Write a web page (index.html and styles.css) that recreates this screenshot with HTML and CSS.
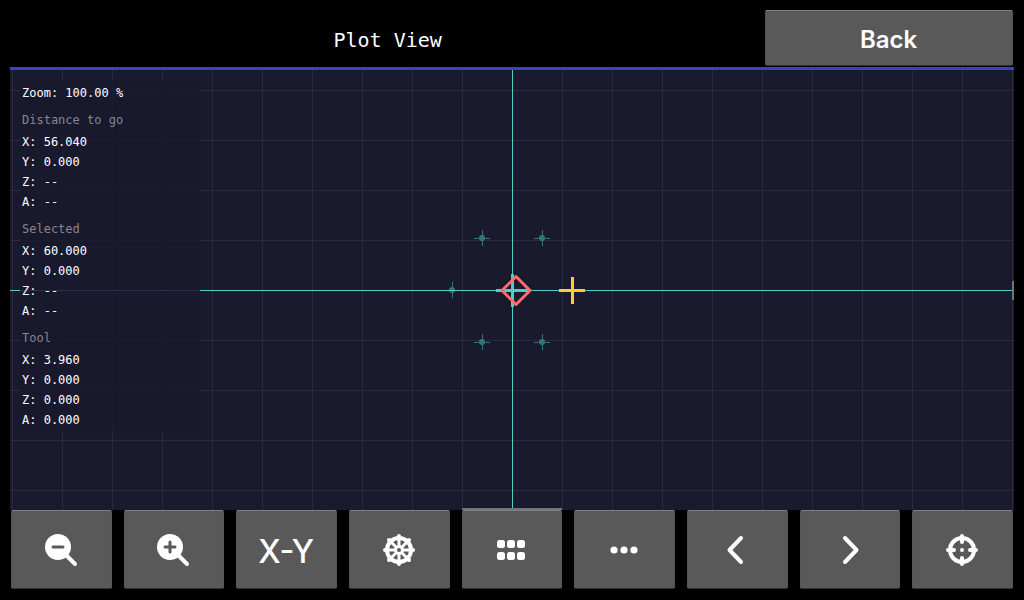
FILE: index.html
```
<!DOCTYPE html>
<html lang="en">
<head>
	<meta charset="utf-8">
	<meta name="viewport" content="width=device-width, initial-scale=1">
	<title>Plot View</title>
	<link rel="stylesheet" href="styles.css">
</head>
<body>
	<header class="header">
		<h1 class="title">Plot View</h1>
		<button type="button" class="btn back">Back</button>
	</header>
	<main class="plot">
		<svg class="canvas" viewBox="-502 -220 1004 440" preserveAspectRatio="xMidYMid slice" role="img" aria-label="Tool path plot">
			<defs>
				<pattern id="grid" width="50" height="50" patternUnits="userSpaceOnUse">
					<rect width="50" height="1" fill="#2a2a3d"/>
					<rect width="1" height="50" fill="#2a2a3d"/>
				</pattern>
				<g id="point">
					<circle cx="0" cy="0" r="3"/>
					<rect x="-8" y="0" width="16" height="1"/>
					<rect x="0" y="-8" width="1" height="16"/>
				</g>
			</defs>
			<rect x="-502" y="-220" width="1004" height="440" fill="url(#grid)"/>
			<!-- hole positions -->
			<g class="points">
				<use href="#point" x="-30" y="-52"/>
				<use href="#point" x="30" y="-52"/>
				<use href="#point" x="-60" y="0"/>
				<use href="#point" x="-30" y="52"/>
				<use href="#point" x="30" y="52"/>
			</g>
			<!-- axes and origin -->
			<g fill="#4ecdc4">
				<rect x="-502" y="0" width="1004" height="1"/>
				<rect x="0" y="-220" width="1" height="440"/>
				<rect x="-16" y="-1" width="33" height="3"/>
				<rect x="-1" y="-16" width="3" height="33"/>
			</g>
			<!-- selected point -->
			<g fill="#ffcc33">
				<rect x="47" y="-1" width="26" height="3"/>
				<rect x="59" y="-13" width="3" height="27"/>
			</g>
			<!-- tool -->
			<path class="tool" d="M4 -13.5L18 .5L4 14.5L-10 .5Z"/>
		</svg>
		<section class="readout">
			<p>Zoom: 100.00 %</p>
			<h2>Distance to go</h2>
			<p>X: 56.040</p>
			<p>Y: 0.000</p>
			<p>Z: --</p>
			<p>A: --</p>
			<h2>Selected</h2>
			<p>X: 60.000</p>
			<p>Y: 0.000</p>
			<p>Z: --</p>
			<p>A: --</p>
			<h2>Tool</h2>
			<p>X: 3.960</p>
			<p>Y: 0.000</p>
			<p>Z: 0.000</p>
			<p>A: 0.000</p>
		</section>
		<div class="scroll-x"></div>
		<div class="scroll-y"></div>
	</main>
	<nav class="toolbar">
		<button type="button" class="btn" aria-label="Zoom out">
			<svg class="icon" viewBox="0 0 32 32"><path class="line" d="M20 20L30 30"/><circle cx="13" cy="13" r="13"/><path class="cut" d="M8 13H18"/></svg>
		</button>
		<button type="button" class="btn" aria-label="Zoom in">
			<svg class="icon" viewBox="0 0 32 32"><path class="line" d="M20 20L30 30"/><circle cx="13" cy="13" r="13"/><path class="cut" d="M8 13H18M13 8V18"/></svg>
		</button>
		<button type="button" class="btn plane">X-Y</button>
		<button type="button" class="btn" aria-label="Handwheel">
			<svg class="icon" viewBox="0 0 32 32">
				<circle class="ring" cx="16" cy="16" r="12"/>
				<path class="spokes" d="M16 4V28M4 16H28M7 7L25 25M25 7L7 25"/>
				<path class="line" d="M16 2V3M16 29V30M2 16H3M29 16H30M6 6L7 7M25 25L26 26M26 6L25 7M7 25L6 26"/>
				<circle cx="16" cy="16" r="5"/>
				<circle class="hub" cx="16" cy="16" r="2"/>
			</svg>
		</button>
		<button type="button" class="btn" aria-label="Grid">
			<svg class="icon" viewBox="0 0 32 32">
				<rect x="2" y="6" width="8" height="8" rx="2.5"/>
				<rect x="12" y="6" width="8" height="8" rx="2.5"/>
				<rect x="22" y="6" width="8" height="8" rx="2.5"/>
				<rect x="2" y="18" width="8" height="8" rx="2.5"/>
				<rect x="12" y="18" width="8" height="8" rx="2.5"/>
				<rect x="22" y="18" width="8" height="8" rx="2.5"/>
			</svg>
		</button>
		<button type="button" class="btn" aria-label="More">
			<svg class="icon" viewBox="0 0 32 32"><circle cx="6" cy="16" r="3.6"/><circle cx="16" cy="16" r="3.6"/><circle cx="26" cy="16" r="3.6"/></svg>
		</button>
		<button type="button" class="btn" aria-label="Previous">
			<svg class="icon" viewBox="0 0 32 32"><path class="line" d="M20 4L8.5 16L20 28"/></svg>
		</button>
		<button type="button" class="btn" aria-label="Next">
			<svg class="icon" viewBox="0 0 32 32"><path class="line" d="M12 4L23.5 16L12 28"/></svg>
		</button>
		<button type="button" class="btn" aria-label="Go to point">
			<svg class="icon" viewBox="0 0 32 32">
				<circle class="ring" cx="16" cy="16" r="12"/>
				<path class="line" d="M16 2V8M16 24V30M2 16H8M24 16H30"/>
				<circle cx="16" cy="16" r="2"/>
			</svg>
		</button>
	</nav>
</body>
</html>
```
FILE: styles.css
```
*{
	box-sizing: border-box;
}
body{
	margin: 0;
	height: 100vh;
	padding: 10px 10px 11px;
	display: flex;
	flex-direction: column;
	background: #000;
	color: #fff;
	font-family: "DejaVu Sans Mono", monospace;
}
.header{
	display: flex;
	align-items: center;
	padding: 0 1px 1px 0;
}
.title{
	flex: 1;
	margin: 0;
	padding-top: 3px;
	text-align: center;
	font-size: 20px;
	font-weight: normal;
}
.btn{
	display: flex;
	align-items: center;
	justify-content: center;
	min-width: 0;
	padding: 0 1px 0 0;
	border: 1px solid #555;
	border-top-color: #828282;
	border-bottom-color: #333;
	border-radius: 2px;
	background: #595959;
	color: #fff;
	font-family: Inter, sans-serif;
}
.back{
	width: 24.7%;
	height: 56px;
	padding-top: 2px;
	font-size: 24px;
	font-weight: 600;
}
.plot{
	position: relative;
	flex: 1;
	min-height: 0;
	padding: 10px;
	border-top: 3px solid #4040c0;
	background: #1a1a2e;
}
.canvas{
	position: absolute;
	top: 0;
	left: 0;
	width: 100%;
	height: 100%;
}
.points{
	fill: #4ecdc4;
	opacity: 0.5;
}
.tool{
	fill: none;
	stroke: #ff6b6b;
	stroke-width: 3;
	stroke-linejoin: round;
}
/* lies over the plot, lets the axis shine through a little */
.readout{
	position: relative;
	width: 180px;
	padding: 3px 2px 1px;
	background: rgba(26, 26, 46, 0.85);
	font-size: 12px;
	line-height: 20px;
}
.readout p{
	margin: 0;
}
.readout h2{
	margin: 7px 0 2px;
	font-size: 12px;
	font-weight: normal;
	color: #85858f;
}
.scroll-x, .scroll-y{
	position: absolute;
	background: #73737c;
}
.scroll-x{
	left: 45%;
	bottom: 0;
	width: 10%;
	height: 2px;
}
.scroll-y{
	top: 48%;
	right: 0;
	width: 2px;
	height: 19px;
}
.toolbar{
	display: grid;
	grid-template-columns: repeat(9, 1fr);
	gap: 12px;
	height: 79px;
	padding: 0 1px;
}
.plane{
	padding-top: 3px;
	font-size: 32px;
	font-weight: 500;
}
.icon{
	width: 32px;
	height: 32px;
	fill: #fff;
}
.line, .cut, .ring, .spokes{
	fill: none;
	stroke: #fff;
	stroke-width: 4;
	stroke-linecap: round;
	stroke-linejoin: round;
}
.cut{
	stroke: #595959;
	stroke-width: 3;
}
.spokes{
	stroke-width: 3;
}
.hub{
	fill: #595959;
}
```
